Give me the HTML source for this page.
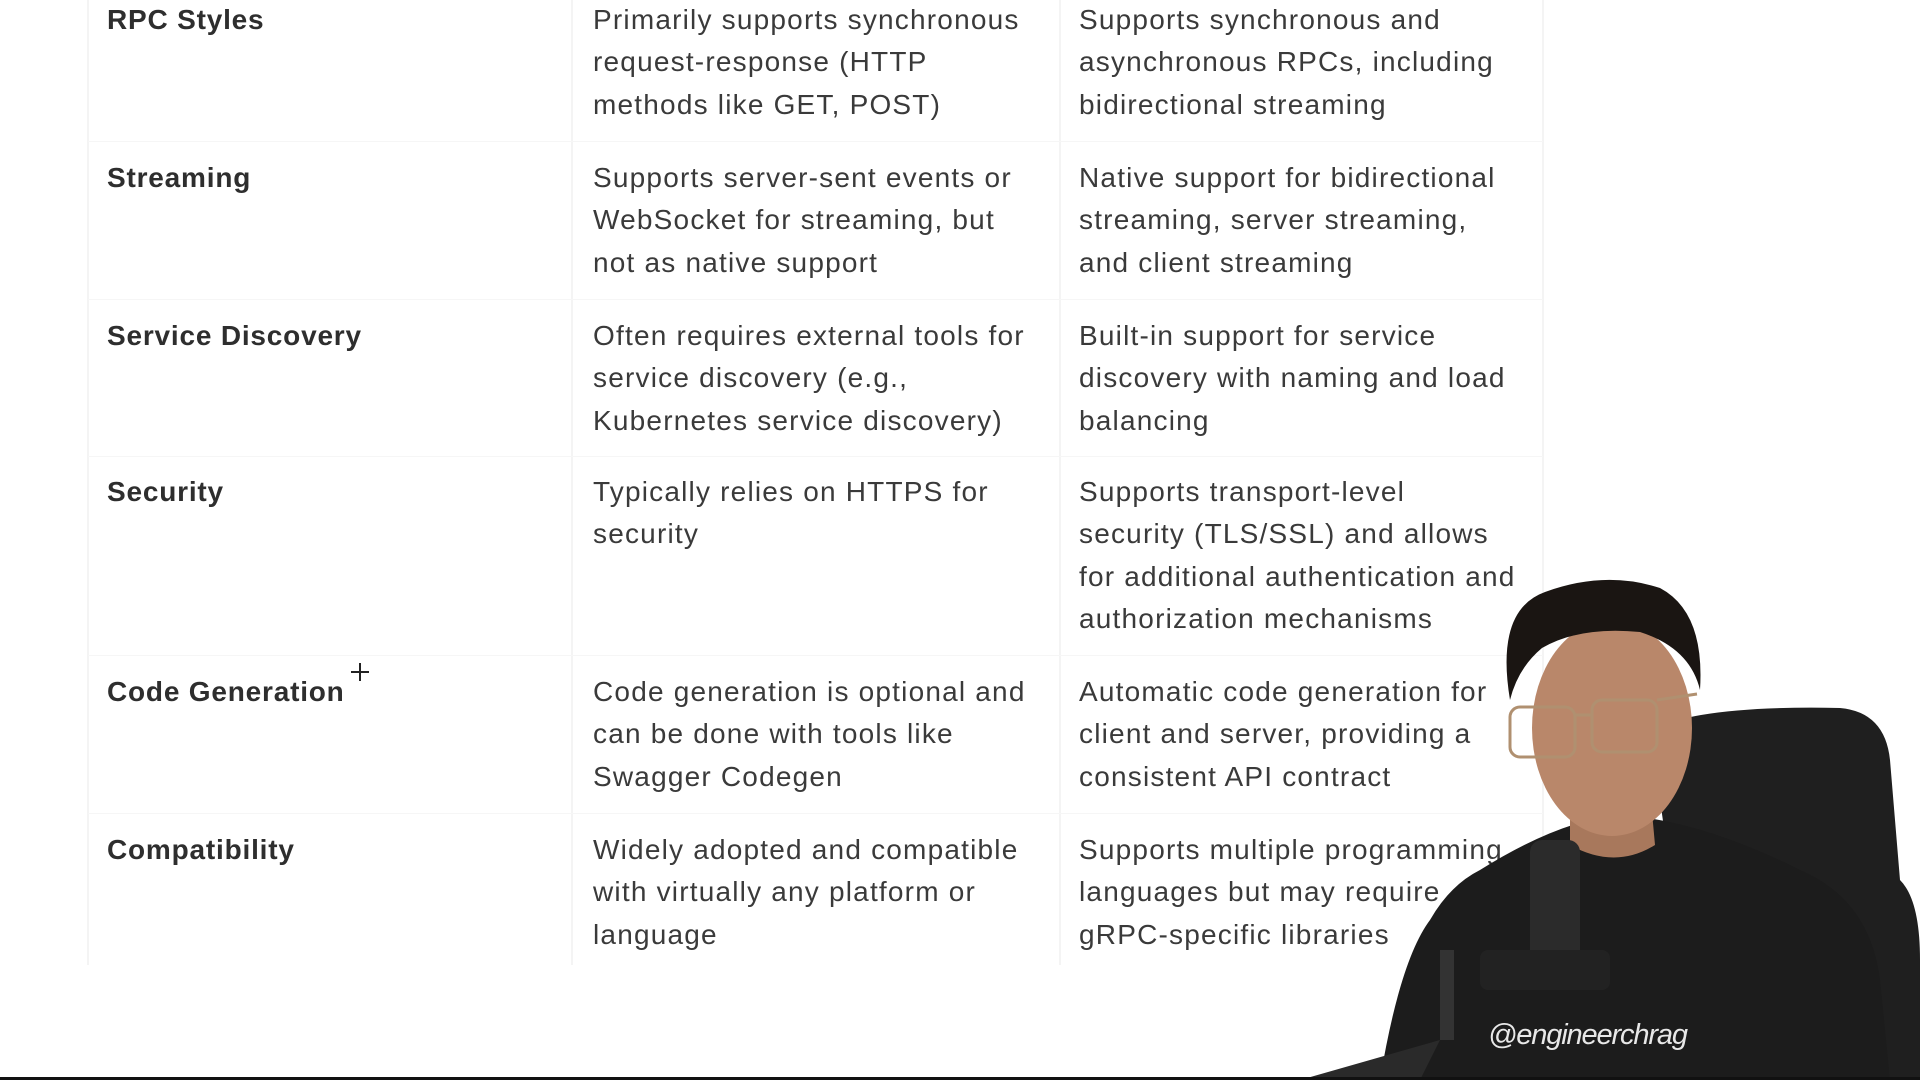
<!DOCTYPE html>
<html><head><meta charset="utf-8"><style>
html,body{margin:0;padding:0;width:1920px;height:1080px;overflow:hidden;background:#fff;}
body{position:relative;font-family:"Liberation Sans",Arial,sans-serif;color:#3a3a3a;}
.v{position:absolute;top:0;height:965px;width:2px;background:#f4f4f4;}
.h{position:absolute;height:1px;background:#f6f6f6;left:88px;width:1455px;}
.c{position:absolute;font-size:28px;line-height:42.3px;letter-spacing:1.2px;white-space:nowrap;}
.k{font-weight:bold;color:#2e2e2e;letter-spacing:0.8px;}
</style></head><body>
<div class="v" style="left:87px"></div>
<div class="v" style="left:571px"></div>
<div class="v" style="left:1059px"></div>
<div class="v" style="left:1542px"></div>
<div class="h" style="top:141px"></div>
<div class="h" style="top:299px"></div>
<div class="h" style="top:456px"></div>
<div class="h" style="top:655px"></div>
<div class="h" style="top:813px"></div>

<div class="c k" style="left:107px;top:-1px">RPC Styles</div>
<div class="c" style="left:593px;top:-1px">Primarily supports synchronous<br>request-response (HTTP<br>methods like GET, POST)</div>
<div class="c" style="left:1079px;top:-1px">Supports synchronous and<br>asynchronous RPCs, including<br>bidirectional streaming</div>

<div class="c k" style="left:107px;top:157px">Streaming</div>
<div class="c" style="left:593px;top:157px">Supports server-sent events or<br>WebSocket for streaming, but<br>not as native support</div>
<div class="c" style="left:1079px;top:157px">Native support for bidirectional<br>streaming, server streaming,<br>and client streaming</div>

<div class="c k" style="left:107px;top:315px">Service Discovery</div>
<div class="c" style="left:593px;top:315px">Often requires external tools for<br>service discovery (e.g.,<br>Kubernetes service discovery)</div>
<div class="c" style="left:1079px;top:315px">Built-in support for service<br>discovery with naming and load<br>balancing</div>

<div class="c k" style="left:107px;top:471px">Security</div>
<div class="c" style="left:593px;top:471px">Typically relies on HTTPS for<br>security</div>
<div class="c" style="left:1079px;top:471px">Supports transport-level<br>security (TLS/SSL) and allows<br>for additional authentication and<br>authorization mechanisms</div>

<div class="c k" style="left:107px;top:671px">Code Generation</div>
<div class="c" style="left:593px;top:671px">Code generation is optional and<br>can be done with tools like<br>Swagger Codegen</div>
<div class="c" style="left:1079px;top:671px">Automatic code generation for<br>client and server, providing a<br>consistent API contract</div>

<div class="c k" style="left:107px;top:829px">Compatibility</div>
<div class="c" style="left:593px;top:829px">Widely adopted and compatible<br>with virtually any platform or<br>language</div>
<div class="c" style="left:1079px;top:829px">Supports multiple programming<br>languages but may require<br>gRPC-specific libraries</div>

<svg style="position:absolute;left:0;top:0" width="1920" height="1080">
 <g stroke="#222" stroke-width="2" fill="none"><path d="M360 663v18M351 672h18"/></g>
 <path d="M1650 730 Q1700 705 1840 708 Q1885 712 1890 760 L1900 880 Q1920 900 1920 960 L1920 1080 L1700 1080 Z" fill="#1f1f1f"/>
 <path d="M1480 870 Q1560 820 1620 815 Q1700 820 1800 870 Q1870 900 1880 980 L1890 1080 L1380 1080 Q1400 960 1430 920 Q1450 885 1480 870 Z" fill="#1c1c1c"/>
 <path d="M1440 1040 L1300 1080 L1420 1080 Z" fill="#2a2a2a"/>
 <path d="M1570 790 L1650 790 L1655 845 Q1615 870 1570 845 Z" fill="#a8785c"/>
 <ellipse cx="1612" cy="728" rx="80" ry="108" fill="#b9876a"/>
 <path d="M1510 700 Q1495 610 1545 592 Q1605 570 1660 588 Q1705 612 1700 690 Q1690 648 1640 632 Q1580 626 1542 648 Q1518 668 1510 700 Z" fill="#1a1512"/>
 <g stroke="#b09070" stroke-width="3" fill="none"><rect x="1510" y="707" width="65" height="50" rx="10"/><rect x="1592" y="700" width="65" height="52" rx="10"/><path d="M1575 715h17M1657 700l40-6"/></g>
 <rect x="1530" y="840" width="50" height="140" rx="12" fill="#2b2b2b"/>
 <rect x="1480" y="950" width="130" height="40" rx="8" fill="#222"/>
 <rect x="1440" y="950" width="14" height="90" fill="#333"/>
 <text x="1488" y="1044" fill="#e8e8e8" font-family="Liberation Sans, sans-serif" font-size="29" font-style="italic" textLength="200">@engineerchrag</text>
</svg>
<div style="position:absolute;left:0;top:1077px;width:1920px;height:3px;background:#111"></div>
</body></html>
